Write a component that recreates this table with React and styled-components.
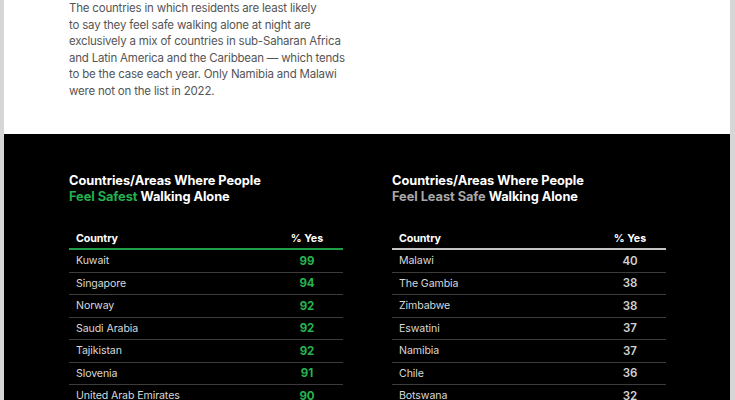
import React from "react";
import styled, { createGlobalStyle } from "styled-components";

const Global = createGlobalStyle`
  html, body { margin: 0; padding: 0; background: #d6d6d6; }
  body { font-family: Inter, "Noto Sans", sans-serif; }
`;

const Frame = styled.div`
  width: 735px;
  height: 400px;
  box-sizing: border-box;
  padding: 0 5px 0 4px;
  background: #d6d6d6;
  overflow: hidden;
`;

const Sheet = styled.div`
  display: flex;
  flex-direction: column;
  background: #000;
  height: 100%;
`;

const Intro = styled.section`
  flex-shrink: 0;
  background: #fff;
  height: 134px;
  padding-left: 65px;
  box-sizing: border-box;
  display: flow-root;
`;

const Para = styled.p`
  margin: 0;
  font-size: 11.5px;
  line-height: 16.6px;
  color: #555;
  letter-spacing: -0.2px;
  span { display: block; white-space: nowrap; }
`;

const Dark = styled.section`
  background: #000;
  flex: 1;
  display: grid;
  grid-template-columns: 274px 274px;
  column-gap: 49px;
  padding: 39px 0 0 65px;
`;

const Panel = styled.div`
  display: flex;
  flex-direction: column;
`;

const Title = styled.h2`
  margin: 0 0 24px;
  font-size: 12.8px;
  line-height: 16px;
  font-weight: 700;
  color: #fff;
  letter-spacing: -0.05px;
`;

const Accent = styled.span`
  color: ${(p) => p.$c};
`;

const Table = styled.div`
  display: flex;
  flex-direction: column;
`;

const Row = styled.div`
  display: grid;
  grid-template-columns: 1fr 72px;
  align-items: center;
  height: ${(p) => (p.$head ? "21px" : "22.5px")};
  padding-left: 7px;
  border-bottom: ${(p) =>
    p.$head ? `2px solid ${p.$line}` : "1px solid #3c3c3c"};
  box-sizing: border-box;
`;

const Name = styled.span`
  font-size: ${(p) => (p.$head ? "10.7px" : "10.6px")};
  letter-spacing: -0.1px;
  color: ${(p) => (p.$head ? "#fff" : "#d8d8d8")};
  font-weight: ${(p) => (p.$head ? 700 : 400)};
`;

const Val = styled.span`
  text-align: center;
  font-size: ${(p) => (p.$head ? "10.7px" : "11.5px")};
  font-weight: ${(p) => p.$w};
  color: ${(p) => p.$c};
`;

const safest = [
  ["Kuwait", 99],
  ["Singapore", 94],
  ["Norway", 92],
  ["Saudi Arabia", 92],
  ["Tajikistan", 92],
  ["Slovenia", 91],
  ["United Arab Emirates", 90],
];

const least = [
  ["Malawi", 40],
  ["The Gambia", 38],
  ["Zimbabwe", 38],
  ["Eswatini", 37],
  ["Namibia", 37],
  ["Chile", 36],
  ["Botswana", 32],
];

function DataTable({ rows, line, valColor, valWeight }) {
  return (
    <Table>
      <Row $head $line={line}>
        <Name $head>Country</Name>
        <Val $head $c="#fff" $w={700}>% Yes</Val>
      </Row>
      {rows.map(([n, v]) => (
        <Row key={n}>
          <Name>{n}</Name>
          <Val $c={valColor} $w={valWeight}>{v}</Val>
        </Row>
      ))}
    </Table>
  );
}

export default function App() {
  return (
    <>
      <Global />
      <Frame>
        <Sheet>
          <Intro>
            <Para>
              <span>The countries in which residents are least likely</span>
              <span>to say they feel safe walking alone at night are</span>
              <span>exclusively a mix of countries in sub-Saharan Africa</span>
              <span>and Latin America and the Caribbean — which tends</span>
              <span>to be the case each year. Only Namibia and Malawi</span>
              <span>were not on the list in 2022.</span>
            </Para>
          </Intro>
          <Dark>
            <Panel>
              <Title>
                Countries/Areas Where People
                <br />
                <Accent $c="#23b14d">Feel Safest</Accent> Walking Alone
              </Title>
              <DataTable
                rows={safest}
                line="#1f9e48"
                valColor="#26b34f"
                valWeight={700}
              />
            </Panel>
            <Panel>
              <Title>
                Countries/Areas Where People
                <br />
                <Accent $c="#a8a8a8">Feel Least Safe</Accent> Walking Alone
              </Title>
              <DataTable
                rows={least}
                line="#c4c4c4"
                valColor="#d2d2d2"
                valWeight={600}
              />
            </Panel>
          </Dark>
        </Sheet>
      </Frame>
    </>
  );
}
